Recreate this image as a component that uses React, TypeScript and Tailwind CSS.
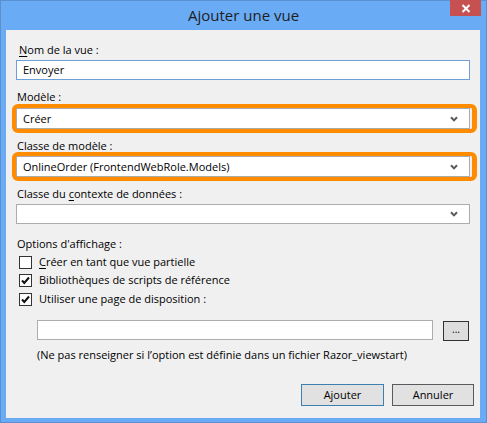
import type { ReactNode } from 'react';

const FONT = "font-['Open_Sans','Noto_Sans',sans-serif]";

function Chevron() {
  return (
    <svg width="8" height="6" viewBox="0 0 8 6" className="shrink-0">
      <path d="M1 1.2 L4 4.4 L7 1.2" fill="none" stroke="#5a5a5a" strokeWidth="2" />
    </svg>
  );
}

function Label({ children, className = '' }: { children: ReactNode; className?: string }) {
  return <div className={`h-4 leading-4 text-black ${className}`}>{children}</div>;
}

function ComboBox({ value, highlight, tall = true, className = '' }: { value?: string; highlight?: boolean; tall?: boolean; className?: string }) {
  return (
    <div className={`relative ${className}`}>
      <div
        className={`flex items-center justify-between bg-white border border-[#acacac] pl-[6px] pr-[11px] ${tall ? 'h-[21px]' : 'h-5'}`}
      >
        <span className="leading-4">{value}</span>
        <Chevron />
      </div>
      {highlight && (
        <div className="absolute -top-[4px] -left-[4px] -bottom-[4px] -right-[7px] border-[4px] border-r-[5px] border-[#ff8c00] rounded-[6px] pointer-events-none" />
      )}
    </div>
  );
}

function CheckBox({ checked, children, className = '' }: { checked?: boolean; children: ReactNode; className?: string }) {
  return (
    <div className={`flex items-start pl-[3px] ${className}`}>
      <div className="mt-[4px] w-[13px] h-[13px] border border-[#333333] bg-white flex items-center justify-center">
        {checked && (
          <svg width="11" height="11" viewBox="0 0 11 11">
            <path d="M2 5.5 L4.3 8 L9 2.5" fill="none" stroke="#111" strokeWidth="2" />
          </svg>
        )}
      </div>
      <span className="ml-[7px] leading-[20px]">{children}</span>
    </div>
  );
}

export default function App() {
  return (
    <div className={`${FONT} text-[11px] text-black w-[487px] h-[423px] bg-[#6aabf5] border border-[#5b8fd0] flex flex-col`}>
      <div className="relative h-[29px] flex items-start justify-center shrink-0">
        <span className="mt-[4px] text-[15px] leading-5 text-[#1e1e1e]">Ajouter une vue</span>
        <div className="absolute -top-[1px] right-[5px] w-[31px] h-[16px] bg-[#c75050] flex items-center justify-center">
          <svg width="10" height="9" viewBox="0 0 10 9">
            <path d="M1.5 1 L8.5 8 M8.5 1 L1.5 8" stroke="#fff" strokeWidth="2" />
          </svg>
        </div>
      </div>

      <div className="ml-[5px] w-[474px] h-[388px] bg-[#f0f0f0] flex flex-col px-[10px]">
        <Label className="mt-[12px] pl-[3px]">
          <span className="underline underline-offset-2">N</span>om de la vue :
        </Label>
        <div className="mt-[2px] h-5 bg-white border border-[#6e9fd8] pl-[6px] leading-[18px]">Envoyer</div>

        <Label className="mt-[9px] pl-[1px]">Modèle :</Label>
        <ComboBox className="mt-[3px]" value="Créer" highlight />

        <Label className="mt-[9px] pl-[1px]">Classe de modèle :</Label>
        <ComboBox className="mt-[2px]" value="OnlineOrder (FrontendWebRole.Models)" highlight />

        <Label className="mt-[9px] pl-[1px]">
          Classe du <span className="underline underline-offset-2">c</span>ontexte de données :
        </Label>
        <ComboBox className="mt-[2px]" tall={false} />

        <Label className="mt-[12px] pl-[1px]">Options d'affichage :</Label>
        <CheckBox className="h-[18px]">
          <span className="underline underline-offset-2">C</span>réer en tant que vue partielle
        </CheckBox>
        <CheckBox className="h-[19px]" checked>
          Bibliothèques de scripts de référence
        </CheckBox>
        <CheckBox className="h-[18px]" checked>
          Utiliser une page de disposition :
        </CheckBox>

        <div className="mt-[13px] pl-[21px] flex items-start">
          <div className="w-[396px] h-5 bg-white border border-[#acacac]" />
          <div className="ml-[10px] mt-[1px] w-[26px] h-5 border border-[#333333] bg-[#dddddd] flex items-center justify-center text-[10px] leading-none pb-[4px]">
            ...
          </div>
        </div>
        <div className="mt-[6px] pl-[21px] leading-4">
          (Ne pas renseigner si l’option est définie dans un fichier Razor_viewstart)
        </div>

        <div className="mt-[21px] -mr-[4px] flex justify-end gap-[8px]">
          <div className="w-[83px] h-[22px] border border-[#3c7fb1] bg-[#e1e1e1] flex items-center justify-center">
            Ajouter
          </div>
          <div className="w-[82px] h-[22px] border border-[#5a5a5a] bg-[#e1e1e1] flex items-center justify-center">
            Annuler
          </div>
        </div>
      </div>
    </div>
  );
}
